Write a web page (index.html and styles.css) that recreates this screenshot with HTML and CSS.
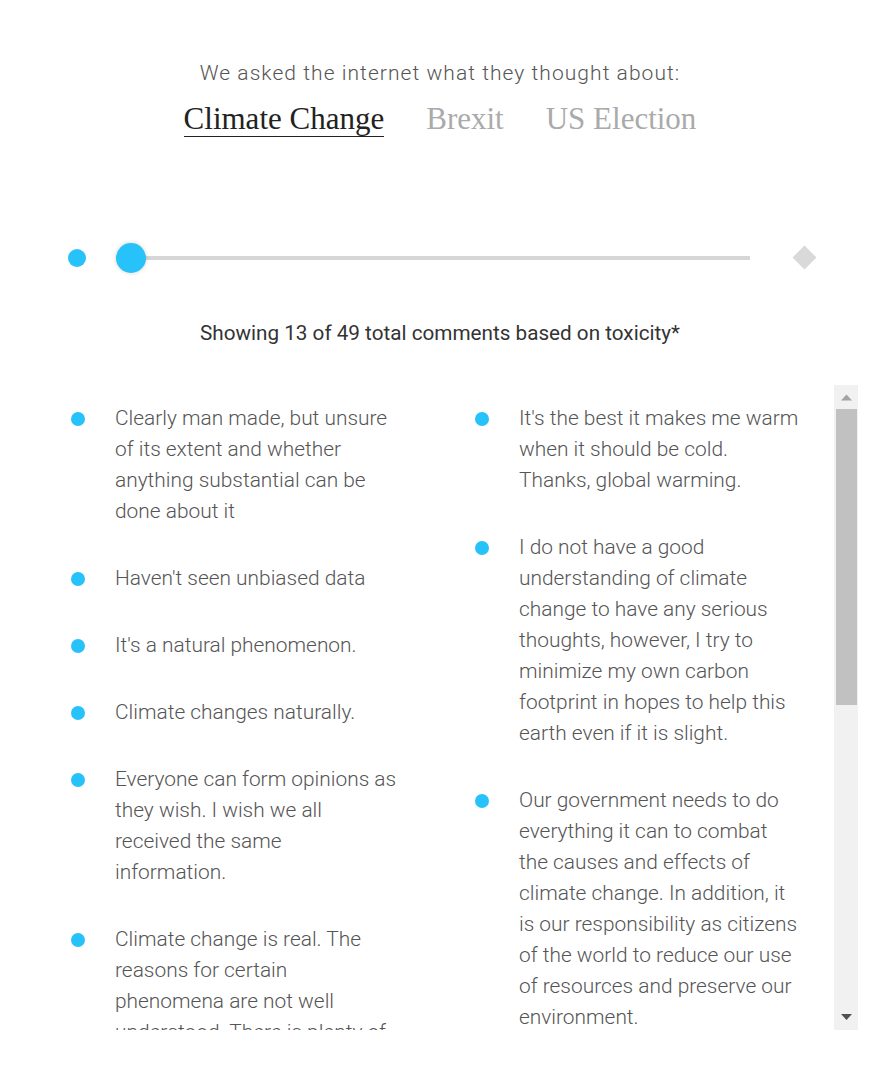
FILE: index.html
```html
<!DOCTYPE html>
<html lang="en">
<head>
<meta charset="utf-8">
<title>Toxicity comments</title>
<link rel="stylesheet" href="styles.css">
</head>
<body>
<div class="page">
  <header class="intro">
    <p class="asked">We asked the internet what they thought about:</p>
    <nav class="tabs">
      <span class="tab active">Climate Change</span>
      <span class="tab">Brexit</span>
      <span class="tab">US Election</span>
    </nav>
  </header>

  <div class="slider">
    <span class="dot-start"></span>
    <div class="track">
      <span class="thumb"></span>
    </div>
    <span class="diamond-box"><span class="diamond"></span></span>
  </div>

  <p class="showing">Showing 13 of 49 total comments based on toxicity*</p>

  <div class="list-wrap">
    <div class="list">
      <div class="columns">
        <ul class="col">
          <li class="item"><span class="bullet"></span><span class="text">Clearly man made, but unsure of its extent and whether anything substantial can be done about it</span></li>
          <li class="item"><span class="bullet"></span><span class="text">Haven't seen unbiased data</span></li>
          <li class="item"><span class="bullet"></span><span class="text">It's a natural phenomenon.</span></li>
          <li class="item"><span class="bullet"></span><span class="text">Climate changes naturally.</span></li>
          <li class="item"><span class="bullet"></span><span class="text">Everyone can form opinions as they wish. I wish we all received the same information.</span></li>
          <li class="item"><span class="bullet"></span><span class="text">Climate change is real. The reasons for certain phenomena are not well understood. There is plenty of evidence that people are making it worse.</span></li>
          <li class="item"><span class="bullet"></span><span class="text">We should listen to the scientists.</span></li>
        </ul>
        <ul class="col">
          <li class="item"><span class="bullet"></span><span class="text">It's the best it makes me warm when it should be cold. Thanks, global warming.</span></li>
          <li class="item"><span class="bullet"></span><span class="text">I do not have a good understanding of climate change to have any serious thoughts, however, I try to minimize my own carbon footprint in hopes to help this earth even if it is slight.</span></li>
          <li class="item"><span class="bullet"></span><span class="text">Our government needs to do everything it can to combat the causes and effects of climate change. In addition, it is our responsibility as citizens of the world to reduce our use of resources and preserve our environment.</span></li>
          <li class="item"><span class="bullet"></span><span class="text">It is happening and we need to act now.</span></li>
          <li class="item"><span class="bullet"></span><span class="text">I think it is a serious problem.</span></li>
          <li class="item"><span class="bullet"></span><span class="text">It worries me for my children.</span></li>
        </ul>
      </div>
    </div>
    <div class="scrollbar">
      <div class="sb-btn">
        <svg width="24" height="24" viewBox="0 0 24 24"><polygon points="7,15.5 12.5,9.5 18,15.5" fill="#a3a3a3"/></svg>
      </div>
      <div class="sb-track"><div class="sb-thumb"></div></div>
      <div class="sb-btn">
        <svg width="24" height="24" viewBox="0 0 24 24"><polygon points="7,8 18,8 12.5,14" fill="#505050"/></svg>
      </div>
    </div>
  </div>
</div>
</body>
</html>
```

FILE: styles.css
```css
html, body {
  margin: 0;
  padding: 0;
  background: #ffffff;
}

body {
  font-family: Roboto, "Liberation Sans", Arial, sans-serif;
  color: #555555;
}

.page {
  width: 884px;
  height: 1072px;
  overflow: hidden;
}

.intro {
  padding: 59px 4px 0 0;
  text-align: center;
}

.asked {
  margin: 0;
  font-size: 21px;
  line-height: 28px;
  font-weight: 300;
  letter-spacing: 1.05px;
  color: #555555;
}

.tabs {
  display: flex;
  justify-content: center;
  gap: 42px;
  margin-top: 15px;
}

.tab {
  font-family: "Liberation Serif", "Times New Roman", serif;
  font-size: 31px;
  line-height: 34px;
  color: #aaaaaa;
  border-bottom: 1.5px solid transparent;
}

.tab.active {
  color: #222222;
  border-bottom-color: #222222;
}

.slider {
  display: flex;
  align-items: center;
  height: 30px;
  margin-top: 105.5px;
  padding: 0 67px 0 68px;
}

.dot-start {
  width: 18px;
  height: 18px;
  border-radius: 50%;
  background: #27c2fa;
  flex: none;
}

.track {
  position: relative;
  flex: 1;
  height: 4px;
  margin-left: 30px;
  margin-right: 42px;
  background: #d6d6d6;
}

.thumb {
  position: absolute;
  left: 0;
  top: -13px;
  width: 30px;
  height: 30px;
  border-radius: 50%;
  background: #27c2fa;
  box-shadow: 0 0 4px rgba(0, 0, 0, 0.18);
}

.diamond-box {
  width: 25px;
  height: 25px;
  display: flex;
  align-items: center;
  justify-content: center;
  flex: none;
}

.diamond {
  width: 17px;
  height: 17px;
  background: #d9d9d9;
  transform: rotate(45deg);
}

.showing {
  margin: 46px 0 0;
  padding-right: 4px;
  text-align: center;
  font-size: 20.7px;
  line-height: 28px;
  font-weight: 400;
  color: #333333;
}

.list-wrap {
  display: flex;
  margin-left: 26px;
  margin-top: 38px;
  width: 832px;
  height: 645px;
}

.list {
  width: 808px;
  height: 100%;
  overflow: hidden;
}

.columns {
  display: grid;
  grid-template-columns: 404px 404px;
  align-items: start;
}

.col {
  list-style: none;
  margin: 0;
  padding: 18.5px 0 0 45px;
  display: flex;
  flex-direction: column;
  gap: 36px;
}

.item {
  display: flex;
  align-items: flex-start;
  gap: 30px;
}

.bullet {
  flex: none;
  width: 14px;
  height: 14px;
  margin-top: 8.5px;
  border-radius: 50%;
  background: #27c2fa;
}

.text {
  width: 281.6px;
  font-size: 20.9px;
  line-height: 31px;
  font-weight: 300;
  color: #555555;
}

/* scrollbar drawn beside the list */
.scrollbar {
  width: 24px;
  height: 100%;
  background: #f1f1f1;
  display: flex;
  flex-direction: column;
}

.sb-btn {
  height: 24px;
  flex: none;
}

.sb-btn svg {
  display: block;
}

.sb-track {
  flex: 1;
  padding: 0 1px 0 2px;
}

.sb-thumb {
  height: 296px;
  background: #c1c1c1;
}
```
